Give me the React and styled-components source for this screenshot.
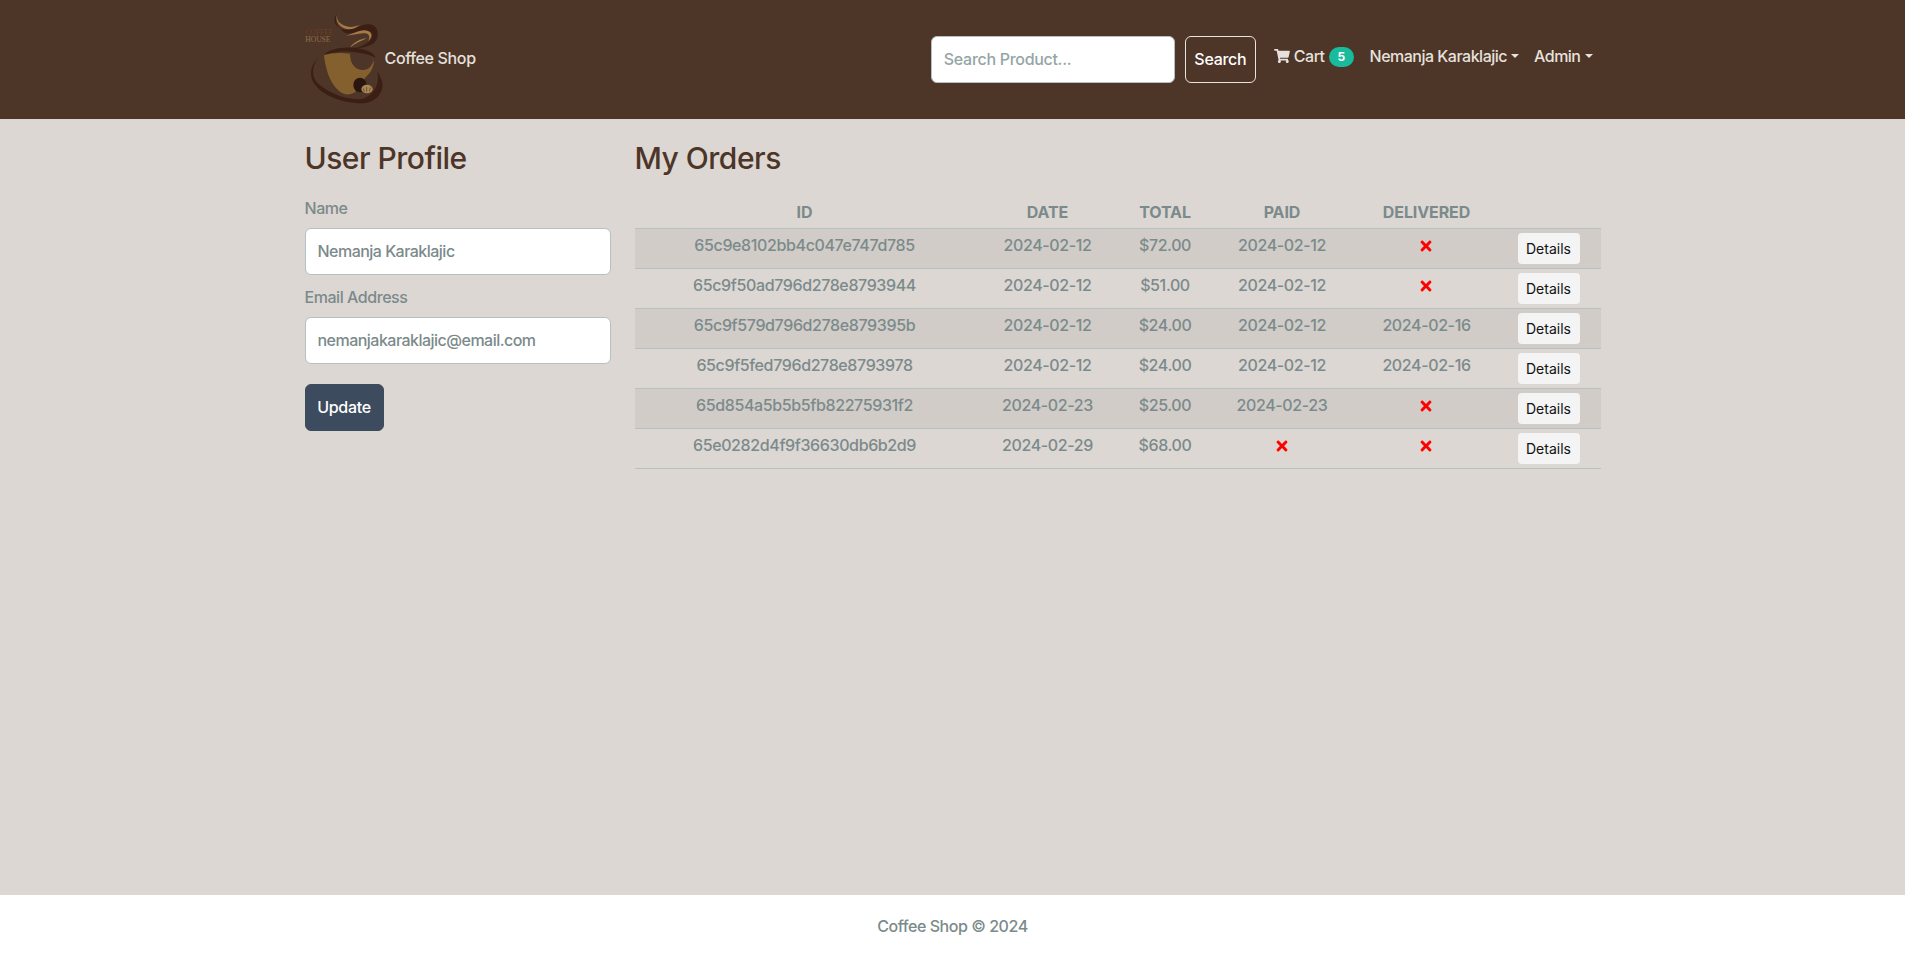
import React from 'react'
import styled, { createGlobalStyle } from 'styled-components'
import { FaShoppingCart, FaTimes } from 'react-icons/fa'

const GlobalStyle = createGlobalStyle`
  html, body {
    margin: 0;
    padding: 0;
    background: #dcd7d3;
    color: #7b8a8b;
    font-family: Inter, "Liberation Sans", sans-serif;
    font-size: 16px;
    font-weight: 450;
    line-height: 24px;
    letter-spacing: -0.45px;
  }
  * { box-sizing: border-box; }
`

const Page = styled.div`
  display: flex;
  flex-direction: column;
  min-height: 973px;
`

const Header = styled.header`
  display: flex;
  justify-content: center;
  height: 119px;
  background: #4d3527;
`

const HeaderInner = styled.div`
  display: flex;
  align-items: center;
  justify-content: space-between;
  width: 1320px;
  padding: 0 12px;
`

const Brand = styled.a`
  display: flex;
  align-items: center;
  color: #e6e1dd;
  font-size: 16px;
  letter-spacing: -0.35px;
`

const BrandText = styled.span`
  margin-top: -4px;
`

const Nav = styled.nav`
  display: flex;
  align-items: center;
  padding-right: 8px;
`

const SearchInput = styled.input`
  width: 244px;
  height: 47px;
  padding: 0 12px 1px;
  background: #fff;
  border: 1px solid #b4c0c1;
  border-radius: 6px;
  color: #7b8a8b;
  font: inherit;
  letter-spacing: -0.3px;

  &::placeholder {
    color: #95a5a6;
    opacity: 1;
  }
`

const SearchButton = styled.button`
  width: 71px;
  height: 47px;
  margin-left: 10px;
  padding: 0 0 1px;
  background: transparent;
  border: 1px solid #e8e4e1;
  border-radius: 6px;
  color: #fff;
  font: inherit;
  font-weight: 500;
  letter-spacing: -0.3px;
`

const NavLink = styled.a`
  display: inline-flex;
  align-items: center;
  margin-left: ${(p) => p.$gap}px;
  margin-top: -7px;
  color: #e6e1dd;
  letter-spacing: -0.5px;
`

const CartIcon = styled(FaShoppingCart)`
  width: 16px;
  height: 14px;
  margin-right: 4px;
`

const Badge = styled.span`
  display: inline-flex;
  align-items: center;
  justify-content: center;
  width: 25px;
  height: 20px;
  margin-left: 4px;
  margin-top: 1px;
  background: #18bc9c;
  border-radius: 10px;
  color: #fff;
  font-size: 12px;
  font-weight: 700;
`

const Caret = styled.span`
  width: 0;
  height: 0;
  margin-left: 4px;
  border-top: 4px solid #e6e1dd;
  border-left: 4px solid transparent;
  border-right: 4px solid transparent;
`

const Main = styled.main`
  flex: 1;
  display: flex;
  justify-content: center;
  padding-top: 16px;
`

const Columns = styled.div`
  display: grid;
  grid-template-columns: 330px 990px;
  width: 1320px;
`

const Col = styled.section`
  padding: 0 12px;
`

const Title = styled.h2`
  margin: 0 0 15px;
  color: #4d3527;
  font-size: 30px;
  font-weight: 550;
  line-height: 46px;
  letter-spacing: -0.5px;
`

const Field = styled.div`
  margin-bottom: 10px;
`

const Label = styled.label`
  display: block;
  margin-bottom: 8px;
`

const Input = styled.input`
  display: block;
  width: 100%;
  height: 47px;
  padding: 0 12px 1px;
  background: #fff;
  border: 1px solid #b4c0c1;
  border-radius: 6px;
  color: #7b8a8b;
  font: inherit;
  letter-spacing: -0.52px;
`

const UpdateButton = styled.button`
  display: block;
  width: 79px;
  height: 47px;
  margin-top: 20px;
  padding: 0 0 2px;
  background: #3c4b5d;
  border: 1px solid #3c4b5d;
  border-radius: 6px;
  color: #fff;
  font: inherit;
  font-weight: 500;
  letter-spacing: -0.3px;
`

const Table = styled.table`
  width: 966px;
  border-collapse: collapse;
  table-layout: fixed;
  text-align: center;
  letter-spacing: -0.38px;
`

const HeadCell = styled.th`
  height: 32px;
  padding: 4px;
  border-bottom: 1px solid #b4c2c2;
  font-weight: 700;
  font-size: 16px;
  letter-spacing: -0.1px;
  vertical-align: top;
`

const Row = styled.tr`
  background: ${(p) => (p.$striped ? '#d1ccc8' : 'transparent')};
`

const Cell = styled.td`
  height: 40px;
  padding: 4px;
  border-bottom: 1px solid #b4c2c2;
  vertical-align: top;
`

const DetailsButton = styled.button`
  display: inline-block;
  width: 62px;
  height: 31px;
  margin-right: 2px;
  padding: 0;
  background: #f4f4f4;
  border: 0;
  border-radius: 4px;
  color: #111;
  font: inherit;
  font-size: 14px;
  font-weight: 400;
  letter-spacing: 0;
  vertical-align: top;
`

const Cross = styled(FaTimes)`
  width: 14px;
  height: 16px;
  margin: 5px 1px 0 0;
  color: #ff0000;
  vertical-align: top;
`

const Footer = styled.footer`
  display: flex;
  align-items: center;
  justify-content: center;
  height: 78px;
  padding-bottom: 17px;
  background: #fff;
`

const LogoMark = styled.svg`
  display: block;
  flex: none;
`

const CoffeeLogo = () => (
  <LogoMark width="80" height="95" viewBox="15 21 240 285">
    <text x="16" y="90" fontFamily="Liberation Serif, serif" fontSize="23" fill="#6b3f25">COFFEE</text>
    <text x="16" y="110" fontFamily="Liberation Serif, serif" fontSize="23" fill="#8f6f4c">HOUSE</text>
    <path d="M112 25C98 40 100 62 125 72C150 80 175 62 200 58C228 55 238 78 232 98C226 118 200 128 165 130C190 122 212 112 216 96C218 82 205 75 185 78C160 82 140 92 128 78C108 62 102 42 112 25Z" fill="#3c1f14" />
    <path d="M112 28C108 45 118 58 140 64C155 68 165 64 180 60C165 72 148 76 132 70C115 62 105 45 112 28Z" fill="#a57a45" />
    <path d="M135 92C155 90 175 75 195 76C215 78 222 92 205 108C212 92 205 84 190 85C172 86 155 92 135 92Z" fill="#a57a45" />
    <path d="M150 128C160 112 180 102 200 100C185 108 165 115 150 128Z" fill="#a57a45" />
    <path d="M72 150C90 130 140 122 185 132C210 138 226 148 226 158C205 146 175 142 150 140C120 138 95 142 72 150Z" fill="#3c1f14" />
    <path d="M72 150C95 143 125 142 150 146C150 175 165 195 190 195C205 195 215 185 222 165C222 185 212 205 195 218C185 245 170 262 150 268C125 272 105 250 92 225C82 205 74 175 72 150Z" fill="#84602f" />
    <path d="M55 160C34 178 26 205 40 232C62 270 125 295 185 295C225 295 255 262 246 228C243 218 238 208 232 200C240 240 220 272 185 282C140 288 80 262 50 232C34 212 36 182 55 160Z" fill="#3c1f14" />
    <ellipse cx="180" cy="240" rx="20" ry="22" fill="#2a1610" />
    <ellipse cx="201" cy="252" rx="17" ry="13" fill="#a98753" />
    <path d="M190 250l3 10M200 246v14M211 248l-3 11" stroke="#4d3527" strokeWidth="2" fill="none" />
  </LogoMark>
)

const orders = [
  ['65c9e8102bb4c047e747d785', '2024-02-12', '$72.00', '2024-02-12', null],
  ['65c9f50ad796d278e8793944', '2024-02-12', '$51.00', '2024-02-12', null],
  ['65c9f579d796d278e879395b', '2024-02-12', '$24.00', '2024-02-12', '2024-02-16'],
  ['65c9f5fed796d278e8793978', '2024-02-12', '$24.00', '2024-02-12', '2024-02-16'],
  ['65d854a5b5b5fb82275931f2', '2024-02-23', '$25.00', '2024-02-23', null],
  ['65e0282d4f9f36630db6b2d9', '2024-02-29', '$68.00', null, null],
]

const App = () => {
  return (
    <Page>
      <GlobalStyle />
      <Header>
        <HeaderInner>
          <Brand>
            <CoffeeLogo />
            <BrandText>Coffee Shop</BrandText>
          </Brand>
          <Nav>
            <SearchInput placeholder="Search Product..." />
            <SearchButton>Search</SearchButton>
            <NavLink $gap={18}>
              <CartIcon />
              Cart
              <Badge>5</Badge>
            </NavLink>
            <NavLink $gap={16}>
              Nemanja Karaklajic
              <Caret />
            </NavLink>
            <NavLink $gap={15}>
              Admin
              <Caret />
            </NavLink>
          </Nav>
        </HeaderInner>
      </Header>
      <Main>
        <Columns>
          <Col>
            <Title>User Profile</Title>
            <Field>
              <Label>Name</Label>
              <Input defaultValue="Nemanja Karaklajic" />
            </Field>
            <Field>
              <Label>Email Address</Label>
              <Input defaultValue="nemanjakaraklajic@email.com" />
            </Field>
            <UpdateButton>Update</UpdateButton>
          </Col>
          <Col>
            <Title>My Orders</Title>
            <Table>
              <colgroup>
                <col width="340" />
                <col width="146" />
                <col width="89" />
                <col width="145" />
                <col width="144" />
                <col width="102" />
              </colgroup>
              <thead>
                <tr>
                  <HeadCell>ID</HeadCell>
                  <HeadCell>DATE</HeadCell>
                  <HeadCell>TOTAL</HeadCell>
                  <HeadCell>PAID</HeadCell>
                  <HeadCell>DELIVERED</HeadCell>
                  <HeadCell />
                </tr>
              </thead>
              <tbody>
                {orders.map((o, i) => (
                  <Row key={o[0]} $striped={i % 2 === 0}>
                    <Cell>{o[0]}</Cell>
                    <Cell>{o[1]}</Cell>
                    <Cell>{o[2]}</Cell>
                    <Cell>{o[3] || <Cross />}</Cell>
                    <Cell>{o[4] || <Cross />}</Cell>
                    <Cell>
                      <DetailsButton>Details</DetailsButton>
                    </Cell>
                  </Row>
                ))}
              </tbody>
            </Table>
          </Col>
        </Columns>
      </Main>
      <Footer>Coffee Shop © 2024</Footer>
    </Page>
  )
}

export default App
